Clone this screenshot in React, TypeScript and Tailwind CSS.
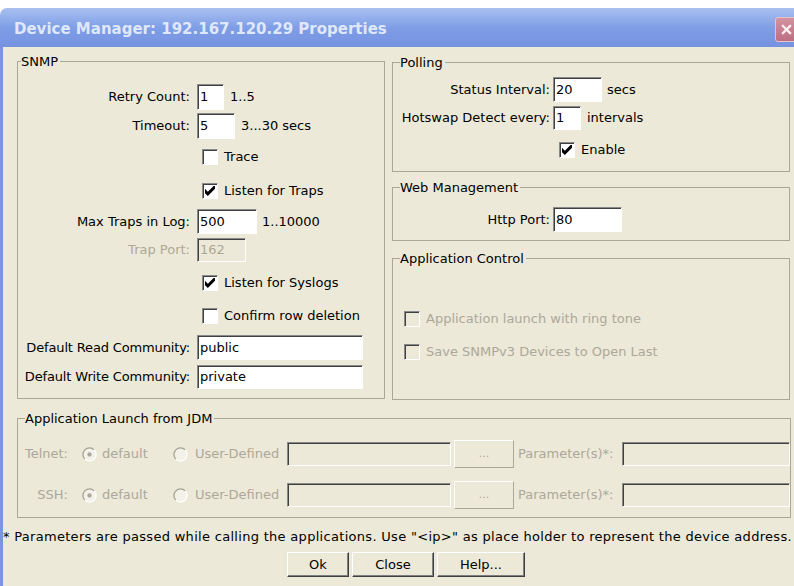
import React from "react";

// sunken edit box, classic look
function TextBox({ value = "", className = "", off = false }: any) {
  return (
    <div
      className={`flex items-center pl-[2px] border border-t-[#8a8a8a] border-l-[#8a8a8a] border-r-white border-b-white shadow-[inset_1px_1px_0_#404040] whitespace-nowrap overflow-hidden ${
        off ? "bg-[#ece9d8] text-[#aca899]" : "bg-white text-black"
      } ${className}`}
    >
      {value}
    </div>
  );
}

function CheckBox({ checked = false, off = false, label }: any) {
  return (
    <div className="flex items-center h-[16px]">
      <span
        className={`w-[16px] h-[16px] flex items-center justify-center border border-t-[#8a8a8a] border-l-[#8a8a8a] border-r-white border-b-white shadow-[inset_1px_1px_0_#404040] ${
          off ? "bg-[#ece9d8]" : "bg-white"
        }`}
      >
        {checked && (
          <svg viewBox="0 0 7 7" className="w-[10px] h-[10px]">
            <path d="M0 2 L2 4 L6 0 L7 0 L7 2 L2 7 L0 5 Z" fill="#000" />
          </svg>
        )}
      </span>
      <span className={`ml-[6px] whitespace-nowrap ${off ? "text-[#aca899]" : ""}`}>
        {label}
      </span>
    </div>
  );
}

// disabled radio: dark arc top-left, light arc bottom-right
function Radio({ selected = false }: any) {
  return (
    <svg viewBox="0 0 16 16" className="w-[15px] h-[15px] shrink-0">
      <circle cx="8" cy="8" r="7" fill="#f4f2e8" />
      <path d="M3.05 12.95 A7 7 0 0 1 12.95 3.05" fill="none" stroke="#a5a295" strokeWidth="1.4" />
      <path d="M12.95 3.05 A7 7 0 0 1 3.05 12.95" fill="none" stroke="#ffffff" strokeWidth="1.4" />
      {selected && <circle cx="8" cy="8" r="2.3" fill="#aca899" />}
    </svg>
  );
}

function PushButton({ label, className = "", off = false }: any) {
  return (
    <div
      className={`flex items-center justify-center h-[25px] border border-t-white border-l-white ${
        off
          ? "border-r-[#aca899] border-b-[#aca899] text-[#aca899]"
          : "border-r-[#404040] border-b-[#404040] shadow-[inset_-1px_-1px_0_#808080]"
      } ${className}`}
    >
      {label}
    </div>
  );
}

function Group({ title, className = "", legendClass = "ml-[7px]", children }: any) {
  return (
    <fieldset className={`border border-[#aaa796] shrink-0 ${className}`}>
      <legend className={`pr-[2px] leading-[17px] ${legendClass}`}>{title}</legend>
      {children}
    </fieldset>
  );
}

function LaunchRow({ name, className = "" }: any) {
  const grey = "text-[#aca899]";
  return (
    <div className={`flex items-center h-[24px] ${className}`}>
      <div className={`w-[50px] text-right ${grey}`}>{name}</div>
      <div className="w-[91px] ml-[14px] flex items-center">
        <Radio selected />
        <span className={`ml-[5px] ${grey}`}>default</span>
      </div>
      <div className="w-[114px] flex items-center">
        <Radio />
        <span className={`ml-[7px] ${grey}`}>User-Defined</span>
      </div>
      <TextBox off className="w-[164px] h-[24px]" />
      <PushButton off label="..." className="w-[60px] ml-[3px] h-[28px] text-[11px]" />
      <div className={`w-[100px] ml-[4px] whitespace-nowrap ${grey}`}>Parameter(s)*:</div>
      <TextBox off className="w-[168px] ml-[4px] h-[24px]" />
    </div>
  );
}

export default function App() {
  return (
    <div className="w-[794px] h-[586px] overflow-hidden bg-white text-black text-[13px] font-['DejaVu_Sans',sans-serif]">
      <div className="h-[8px]" />
      <div className="w-[804px]">
        {/* caption */}
        <div className="h-[39px] rounded-t-[7px] bg-gradient-to-b from-[#a9c0f0] via-[#7f9ee6] to-[#7592e0] flex items-center pl-[14px] pt-[4px]">
          <span className="font-['DejaVu_Sans',sans-serif] font-bold text-[15px] text-[#dfe8f9] whitespace-nowrap">
            Device Manager: 192.167.120.29 Properties
          </span>
          <div className="ml-auto mr-[7px] w-[22px] h-[25px] rounded-[3px] border border-[#e6c4cd] bg-gradient-to-b from-[#d392a0] to-[#bd6f81] flex items-center justify-center">
            <svg viewBox="0 0 10 10" className="w-[11px] h-[11px]">
              <path d="M1 1 L9 9 M9 1 L1 9" stroke="#fbeef1" strokeWidth="2" />
            </svg>
          </div>
        </div>

        {/* client area */}
        <div className="h-[539px] border-l-[3px] border-[#7a96df] bg-[#ece9d8] pt-[6px]">
          <div className="flex items-start ml-[14px] gap-[7px]">
            <Group title="SNMP" legendClass="ml-[3px]" className="w-[368px] h-[346px]">
              <div className="flex items-center mt-[14px] h-[26px]">
                <div className="w-[172px] text-right">Retry Count:</div>
                <TextBox value="1" className="ml-[7px] w-[27px] h-[26px]" />
                <span className="ml-[6px]">1..5</span>
              </div>
              <div className="flex items-center mt-[3px] h-[26px]">
                <div className="w-[172px] text-right">Timeout:</div>
                <TextBox value="5" className="ml-[7px] w-[38px] h-[26px]" />
                <span className="ml-[6px]">3...30 secs</span>
              </div>
              <div className="ml-[184px] mt-[10px]">
                <CheckBox label="Trace" />
              </div>
              <div className="ml-[184px] mt-[18px]">
                <CheckBox checked label="Listen for Traps" />
              </div>
              <div className="flex items-center mt-[10px] h-[25px]">
                <div className="w-[172px] text-right">Max Traps in Log:</div>
                <TextBox value="500" className="ml-[7px] w-[60px] h-[25px]" />
                <span className="ml-[5px]">1..10000</span>
              </div>
              <div className="flex items-center mt-[4px] h-[24px]">
                <div className="w-[172px] text-right text-[#aca899]">Trap Port:</div>
                <TextBox off value="162" className="ml-[7px] w-[49px] h-[24px]" />
              </div>
              <div className="ml-[184px] mt-[13px]">
                <CheckBox checked label="Listen for Syslogs" />
              </div>
              <div className="ml-[184px] mt-[17px]">
                <CheckBox label="Confirm row deletion" />
              </div>
              <div className="flex items-center mt-[11px] h-[25px]">
                <div className="w-[172px] text-right whitespace-nowrap tracking-[-0.15px]">Default Read Community:</div>
                <TextBox value="public" className="ml-[7px] w-[166px] h-[25px]" />
              </div>
              <div className="flex items-center mt-[5px] h-[24px]">
                <div className="w-[172px] text-right whitespace-nowrap tracking-[-0.15px]">Default Write Community:</div>
                <TextBox value="private" className="ml-[7px] w-[166px] h-[24px]" />
              </div>
            </Group>

            <div className="flex flex-col w-[398px]">
              <Group title="Polling" className="w-[398px] h-[118px] mt-[1px]">
                <div className="flex items-center mt-[6px] h-[25px]">
                  <div className="w-[157px] text-right whitespace-nowrap">Status Interval:</div>
                  <TextBox value="20" className="ml-[3px] w-[49px] h-[25px]" />
                  <span className="ml-[5px]">secs</span>
                </div>
                <div className="flex items-center mt-[4px] h-[24px]">
                  <div className="w-[157px] text-right whitespace-nowrap">Hotswap Detect every:</div>
                  <TextBox value="1" className="ml-[3px] w-[28px] h-[24px]" />
                  <span className="ml-[6px]">intervals</span>
                </div>
                <div className="ml-[166px] mt-[12px]">
                  <CheckBox checked label="Enable" />
                </div>
              </Group>

              <Group title="Web Management" className="w-[398px] h-[62px] mt-[7px]">
                <div className="flex items-center mt-[11px] h-[25px]">
                  <div className="w-[157px] text-right">Http Port:</div>
                  <TextBox value="80" className="ml-[3px] w-[69px] h-[25px]" />
                </div>
              </Group>

              <Group title="Application Control" className="w-[398px] h-[150px] mt-[9px]">
                <div className="ml-[11px] mt-[44px]">
                  <CheckBox off label="Application launch with ring tone" />
                </div>
                <div className="ml-[11px] mt-[17px]">
                  <CheckBox off label="Save SNMPv3 Devices to Open Last" />
                </div>
              </Group>
            </div>
          </div>

          <Group title="Application Launch from JDM" className="ml-[14px] mt-[10px] w-[773px] h-[108px]">
            <LaunchRow name="Telnet:" className="mt-[15px]" />
            <LaunchRow name="SSH:" className="mt-[17px]" />
          </Group>

          <div className="mt-[10px] leading-[17px] whitespace-nowrap tracking-[0.3px]">
            * Parameters are passed while calling the applications. Use "&lt;ip&gt;" as place holder to represent the device address.
          </div>

          <div className="flex mt-[7px] ml-[284px] gap-[3px]">
            <PushButton label="Ok" className="w-[62px]" />
            <PushButton label="Close" className="w-[82px]" />
            <PushButton label="Help..." className="w-[88px]" />
          </div>
        </div>
      </div>
    </div>
  );
}
